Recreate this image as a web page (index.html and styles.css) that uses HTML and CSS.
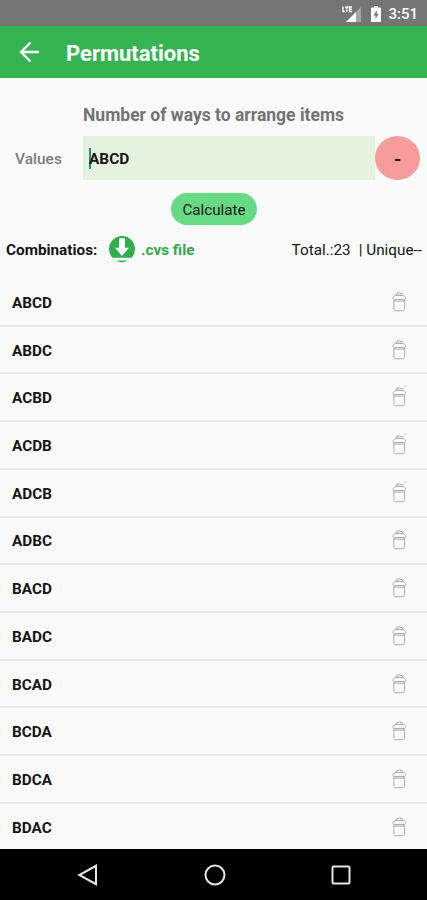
FILE: index.html
```html
<!DOCTYPE html>
<html lang="en">
<head>
  <meta charset="utf-8">
  <title>Permutations</title>
  <link rel="stylesheet" href="styles.css">
</head>
<body>
  <svg class="defs" width="0" height="0">
    <symbol id="bin" viewBox="0 0 16 20">
      <path d="M5 3.400L6 1.500h1.500L8.500.8l1.500.7h1L12 3.400" fill="none" stroke="#999" stroke-width=".9"/>
      <path d="M2 6.500c0-1.800 1.400-3 3-3h6.500c1.600 0 3 1.200 3 3l-.8.900H2.800z" fill="#fff" stroke="#a2a2a2" stroke-width=".9"/>
      <path d="M2.900 7.500v9c0 1.500.8 2.300 2.300 2.300h6.100c1.500 0 2.300-.8 2.300-2.300v-9M3 9h10.500" fill="none" stroke="#a2a2a2" stroke-width=".9"/>
    </symbol>
  </svg>

  <div class="status-bar">
    <svg class="signal" width="20" height="17" viewBox="0 0 20 17">
      <path d="M19 1v15H4z" fill="#a6a6a6"/>
      <path d="M14 6v10H4z" fill="#fff"/>
      <path d="M0 0h11v7H0z" fill="#757575"/>
      <path d="M1 .5v5h2M3.200 1h3.200M4.800 1v5M10 1H7.500v4.500H10M7.500 3.200H10" fill="none" stroke="#fff" stroke-width="1.300"/>
    </svg>
    <svg class="battery" width="10" height="16" viewBox="0 0 10 16">
      <path d="M3 0h4v1.500h2c.6 0 1 .4 1 1V15c0 .6-.4 1-1 1H1c-.6 0-1-.4-1-1V2.500c0-.6.4-1 1-1h2z" fill="#fff"/>
      <path d="M5.800 4.200L2.500 9.500h2v3.500l3.200-5.200h-1.900z" fill="#757575"/>
    </svg>
    <span class="time">3:51</span>
  </div>

  <div class="app-bar">
    <svg width="22" height="22" viewBox="0 0 22 22">
      <path d="M21 11H3M12.500 1.500L3 11l9.500 9.500" fill="none" stroke="#fff" stroke-width="2.400"/>
    </svg>
    <h1>Permutations</h1>
  </div>

  <div class="content">
    <h2>Number of ways to arrange items</h2>

    <div class="input-row">
      <label>Values</label>
      <div class="field"><span class="cursor"></span><span class="value">ABCD</span></div>
      <button class="clear">-</button>
    </div>

    <button class="calculate">Calculate</button>

    <div class="summary">
      <span class="title">Combinatios:</span>
      <svg width="26" height="27" viewBox="0 0 26 27">
        <path d="M3.500 21.800a13 13 0 1 1 19 0z" fill="#2fae4e"/>
        <path d="M7.500 24.500h11c-1.600 1.200-3.500 1.800-5.500 1.800s-3.900-.6-5.500-1.800z" fill="#2fae4e"/>
        <path d="M10 2.200h6v9.500h4L13 20l-7-8.300h4z" fill="#fff"/>
      </svg>
      <span class="file">.cvs file</span>
      <span class="total">Total.:23</span>
      <span class="unique">| Unique--</span>
    </div>
  </div>

  <ul class="list">
    <li><span>ABCD</span><svg><use href="#bin"/></svg></li>
    <li><span>ABDC</span><svg><use href="#bin"/></svg></li>
    <li><span>ACBD</span><svg><use href="#bin"/></svg></li>
    <li><span>ACDB</span><svg><use href="#bin"/></svg></li>
    <li><span>ADCB</span><svg><use href="#bin"/></svg></li>
    <li><span>ADBC</span><svg><use href="#bin"/></svg></li>
    <li><span>BACD</span><svg><use href="#bin"/></svg></li>
    <li><span>BADC</span><svg><use href="#bin"/></svg></li>
    <li><span>BCAD</span><svg><use href="#bin"/></svg></li>
    <li><span>BCDA</span><svg><use href="#bin"/></svg></li>
    <li><span>BDCA</span><svg><use href="#bin"/></svg></li>
    <li><span>BDAC</span><svg><use href="#bin"/></svg></li>
  </ul>

  <div class="nav-bar">
    <svg width="22" height="22" viewBox="0 0 22 22"><path d="M19 1.800v18.400L2.300 11z"/></svg>
    <svg width="22" height="22" viewBox="0 0 22 22"><circle cx="11" cy="11" r="9.500"/></svg>
    <svg width="22" height="22" viewBox="0 0 22 22"><rect x="2.500" y="2.500" width="17" height="17" rx="1"/></svg>
  </div>
</body>
</html>
```
FILE: styles.css
```css
* {
  box-sizing: border-box;
}

body {
  margin: 0;
  height: 900px;
  overflow: hidden;
  display: flex;
  flex-direction: column;
  background-color: #fafafa;
  font-family: Roboto, "Liberation Sans", sans-serif;
  color: #151515;
}

.defs {
  display: none;
}

svg {
  flex-shrink: 0;
}

.status-bar {
  height: 26px;
  flex-shrink: 0;
  display: flex;
  align-items: center;
  justify-content: flex-end;
  padding: 2px 9px 0 0;
  background-color: #757575;
  color: #fff;
}

.signal {
  margin-right: 9px;
}

.battery {
  margin-right: 7px;
}

.time {
  font-size: 15px;
  font-weight: 500;
}

.app-bar {
  height: 52px;
  flex-shrink: 0;
  display: flex;
  align-items: center;
  padding-left: 18px;
  background-color: #36b453;
  color: #fff;
}

.app-bar h1 {
  margin: 2px 0 0 26px;
  font-size: 22px;
  font-weight: 700;
}

.content {
  height: 201px;
  flex-shrink: 0;
  display: flex;
  flex-direction: column;
}

.content h2 {
  margin: 26px 0 0;
  padding-left: 83px;
  font-size: 17.500px;
  line-height: 22px;
  font-weight: 700;
  color: #737373;
}

.input-row {
  display: flex;
  align-items: center;
  margin-top: 10px;
  height: 44px;
}

.input-row label {
  width: 83px;
  padding: 2px 0 0 15px;
  font-size: 15.500px;
  font-weight: 500;
  color: #7c7c7c;
}

.field {
  width: 292px;
  height: 44px;
  display: flex;
  align-items: center;
  padding-left: 6px;
  background-color: #e5f2de;
  font-size: 15.400px;
  font-weight: 700;
}

.value {
  padding-top: 2px;
}

.cursor {
  width: 2px;
  height: 21px;
  margin-right: -2px;
  background-color: #2d8c78;
}

button {
  border: none;
  padding: 0;
  font-family: inherit;
  color: #151515;
}

.clear {
  width: 45px;
  height: 44px;
  padding-top: 2px;
  border-radius: 50%;
  background-color: #f79c9c;
  font-size: 19px;
  font-weight: 700;
}

.calculate {
  width: 86px;
  height: 32px;
  margin: 13px 0 0 171px;
  padding-top: 2px;
  border-radius: 16px;
  background-color: #67da85;
  font-size: 15.200px;
}

.summary {
  display: flex;
  align-items: center;
  height: 28px;
  margin-top: 10px;
  padding: 0 5px 0 6px;
  font-size: 15.300px;
  white-space: pre;
}

.summary span {
  padding-top: 2px;
}

.summary .title {
  width: 103px;
  font-weight: 700;
}

.file {
  margin-left: 6px;
  font-weight: 700;
  color: #32a850;
}

.total {
  margin-left: auto;
}

.unique {
  margin-left: 8px;
}

.list {
  flex: 1;
  min-height: 0;
  margin: 0;
  padding: 0;
  list-style: none;
  overflow: hidden;
}

.list li {
  display: flex;
  align-items: center;
  justify-content: space-between;
  height: 47.720px;
  padding: 0 20px 0 12px;
  border-bottom: 2px solid #e8e8e8;
  font-size: 15.300px;
  font-weight: 700;
}

.list span {
  padding-top: 2px;
}

.list svg {
  width: 16px;
  height: 20px;
}

.list li:last-child {
  border-bottom-color: transparent;
}

.nav-bar {
  height: 51px;
  flex-shrink: 0;
  display: flex;
  align-items: center;
  justify-content: space-between;
  padding: 0 75px 0 77px;
  background-color: #000;
}

.nav-bar svg {
  fill: none;
  stroke: #e6e6e6;
  stroke-width: 2;
}
```
